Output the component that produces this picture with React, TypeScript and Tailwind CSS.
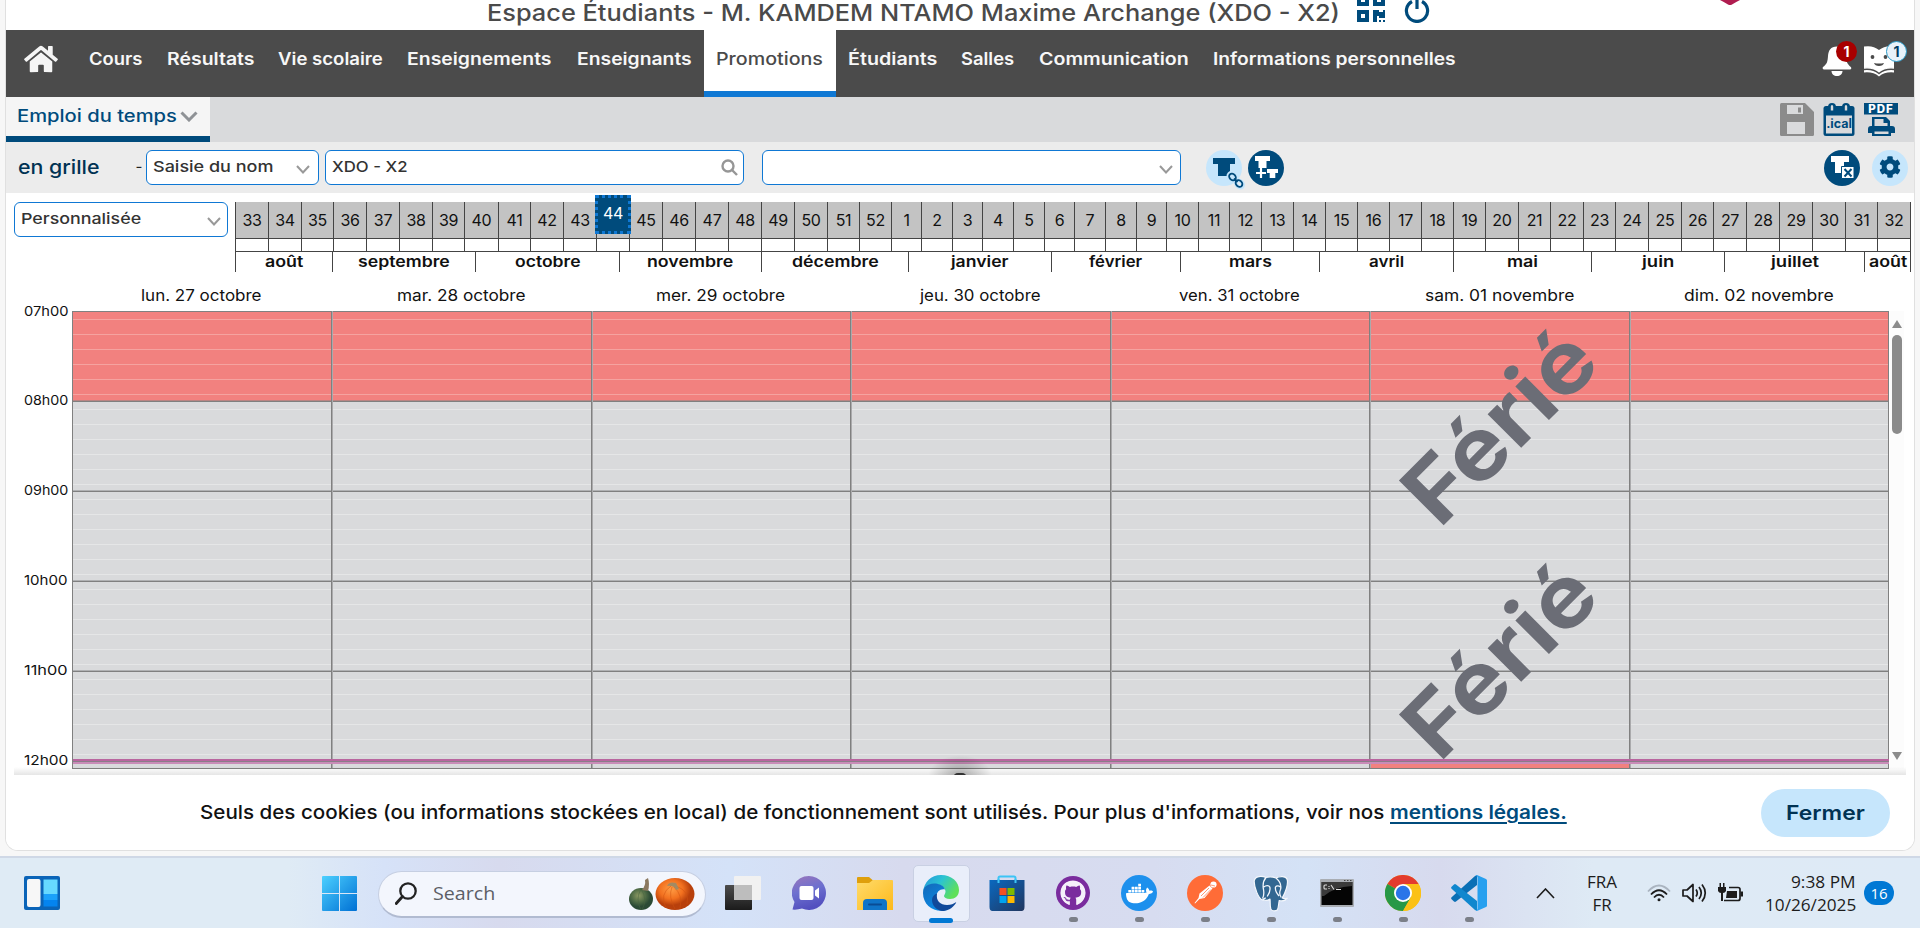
import { useLayoutEffect, useRef, useState } from "react";
import type { ReactNode } from "react";
import { FaHome, FaQrcode, FaCog, FaGithub } from "react-icons/fa";
import { SiDocker } from "react-icons/si";

/** Single line of text stretched horizontally to a given width. */
function T({ w, className = "", children }: { w: number; className?: string; children: ReactNode }) {
  const ref = useRef<HTMLSpanElement>(null);
  const [scale, setScale] = useState(1);
  useLayoutEffect(() => {
    if (ref.current) setScale(w / ref.current.offsetWidth);
  }, [w]);
  return (
    <span className="flex shrink-0 justify-start text-left whitespace-nowrap" style={{ width: w }}>
      <span ref={ref} className={`block shrink-0 origin-left ${className}`} style={{ transform: `scaleX(${scale})` }}>
        {children}
      </span>
    </span>
  );
}

function Chevron({ className = "" }: { className?: string }) {
  return (
    <svg viewBox="0 0 14 9" className={`h-[9px] w-[14px] ${className}`} fill="none" stroke="#999" strokeWidth="2">
      <path d="M1 1l6 6.5L13 1" />
    </svg>
  );
}

const NAV: [string, number][] = [
  ["Cours", 53],
  ["Résultats", 87],
  ["Vie scolaire", 105],
  ["Enseignements", 145],
  ["Enseignants", 114.8],
  ["Promotions", 107.5],
  ["Étudiants", 89.2],
  ["Salles", 53],
  ["Communication", 150],
  ["Informations personnelles", 243],
];

const WEEK_X = [
  235, 268, 301, 333, 366, 399, 432, 464, 498, 530, 563, 596, 629, 662, 695, 728, 761, 794, 827, 859, 891, 921, 952,
  982, 1013, 1044, 1074, 1105, 1136, 1166, 1198, 1229, 1261, 1293, 1325, 1357, 1389, 1421, 1453, 1485, 1518, 1550,
  1583, 1615, 1648, 1681, 1713, 1746, 1779, 1812, 1845, 1877, 1910,
];
const WEEKS = WEEK_X.slice(0, -1).map((x, i) => ({ n: i < 20 ? 33 + i : i - 19, w: WEEK_X[i + 1] - x }));

const MONTHS: [string, number, number][] = [
  ["août", 97, 38],
  ["septembre", 143, 92],
  ["octobre", 144, 65.5],
  ["novembre", 142, 86.5],
  ["décembre", 147, 86.5],
  ["janvier", 143, 57.5],
  ["février", 129, 53.5],
  ["mars", 139, 42.5],
  ["avril", 134, 35],
  ["mai", 138, 31],
  ["juin", 133, 32],
  ["juillet", 140, 48],
  ["août", 46, 38],
];

const DAYS: [string, number, number][] = [
  ["lun. 27 octobre", 259, 121],
  ["mar. 28 octobre", 260, 129],
  ["mer. 29 octobre", 259, 129],
  ["jeu. 30 octobre", 260, 121],
  ["ven. 31 octobre", 259, 121],
  ["sam. 01 novembre", 260, 149],
  ["dim. 02 novembre", 259, 150],
];
const HOURS = ["07h00", "08h00", "09h00", "10h00", "11h00", "12h00"];
const SLOTS = [0, 1, 2, 3, 4, 5];

function Header() {
  return (
    <div className="flex h-[30px] items-start overflow-hidden pl-[481px]">
      <div className="pt-px">
        <T w={853} className="text-[23px] leading-[24px] font-medium text-[#4a4a4a]">
          Espace Étudiants - M. KAMDEM NTAMO Maxime Archange (XDO - X2)
        </T>
      </div>
      <FaQrcode className="-mt-[8px] ml-[15px] size-[32px] shrink-0 text-[#004b7c]" />
      <svg viewBox="0 0 26 26" className="-mt-[3px] ml-[17px] size-[26px] shrink-0" fill="none" stroke="#004b7c" strokeWidth="3.2">
        <path d="M8 4.500a10.600 10.600 0 1 0 10 0M13 0v12" />
      </svg>
      <svg viewBox="0 0 26 6" className="ml-[287px] h-[6px] w-[26px] shrink-0">
        <path d="M3 0h20q-4 2-8 4.600q-2 1-4 0Q7 2 3 0z" fill="#b01d50" />
      </svg>
    </div>
  );
}

function NavBar() {
  return (
    <nav className="flex h-[67px] bg-[#4b4b4b]">
      <div className="w-[71px] shrink-0 pt-[14px] pl-[18px]">
        <FaHome className="h-[30px] w-[34px] text-[#f5f5f5]" />
      </div>
      {NAV.map(([label, w]) =>
        label === "Promotions" ? (
          <div key={label} className="h-full border-b-[6px] border-[#0f78d4] bg-white px-[12.2px]">
            <div className="flex h-[60px] items-center">
              <T w={w} className="text-[17px] font-medium text-[#4a4a4a]">{label}</T>
            </div>
          </div>
        ) : (
          <div key={label} className="flex h-[60px] items-center px-[12.200px]">
            <T w={w} className="text-[17px] font-semibold text-[#f7f7f7]">{label}</T>
          </div>
        ),
      )}
      <div className="mr-[16px] ml-auto flex gap-[11px] pt-[15px]">
        <div className="relative h-[32px] w-[30px]">
          <svg viewBox="0 0 30 32" className="h-[32px] w-[30px]" fill="#fff">
            <path d="M15 1.500c-6.500 0-8.500 4-9 9.500-.4 6-1 8-5 11-.9 1 0 2.500 1 2.500h26c1.300 0 1.700-1.500.8-2.500-3.600-3-4.400-5-4.800-11C23.500 5 21 1.500 15 1.500zM9.500 26h11c0 3-2.500 5-5.500 5s-5.500-2-5.500-5z" />
          </svg>
          <span className="absolute -top-[4px] left-[14px] flex size-[21px] items-center justify-center rounded-full bg-[#a80000] text-[14px] font-bold text-white">1</span>
        </div>
        <div className="relative mr-[3px] h-[32px] w-[32px]">
          <svg viewBox="0 0 32 32" className="size-[32px]">
            <path d="M1 1.500q9-1.500 15 3.500Q22 0 31 1.500V23q-9-1-15 5Q10 22 1 23z" fill="#fff" />
            <path d="M1 22.500q9-1 15 4.500q6-5.500 15-4.500v5q-9-1-15 4q-6-5-15-4z" fill="#fff" />
            <path d="M1 24.500q9-1 15 4q6-5 15-4" fill="none" stroke="#4b4b4b" strokeWidth="1.500" />
            <circle cx="9.500" cy="12" r="1.900" fill="#4b4b4b" />
            <circle cx="22.500" cy="12" r="1.900" fill="#4b4b4b" />
            <path d="M11 18q5 1 10 0q-1 3-5 3t-5-3z" fill="#4b4b4b" />
          </svg>
          <span className="absolute -top-[4px] left-[23px] flex size-[21px] items-center justify-center rounded-full border border-[#2b9bc9] bg-[#e8f2fa] text-[14px] font-bold text-[#003d63]">1</span>
        </div>
      </div>
    </nav>
  );
}

function TabBar() {
  return (
    <div className="flex h-[45px] bg-[#d9dadc]">
      <div className="flex h-full w-[204px] shrink-0 items-center border-b-[6px] border-[#004b7c] bg-[#f5f5f5] pl-[11px]">
        <T w={160} className="text-[17px] font-medium text-[#004b7c]">Emploi du temps</T>
        <svg viewBox="0 0 18 11" className="ml-[3px] h-[11px] w-[18px]" fill="none" stroke="#8f9296" strokeWidth="3">
          <path d="M1.500 1.500L9 9l7.500-7.500" />
        </svg>
      </div>
      <div className="mr-[16px] ml-auto flex gap-[9px] pt-[6px]">
        <svg viewBox="0 0 34 33" className="h-[33px] w-[34px]">
          <path d="M1.500 0H25l9 9v22.500q0 1.500-1.500 1.500h-31Q0 33 0 31.500v-30Q0 0 1.500 0z" fill="#8b8b8b" />
          <path d="M7 2h16v9H7zM7 19h18v12H7z" fill="#d9dadc" />
          <path d="M18 4.500h3v5h-3z" fill="#8b8b8b" />
        </svg>
        <svg viewBox="0 0 32 33" className="h-[33px] w-[32px]">
          <path d="M3 3h26q2.500 0 2.500 2.500v25q0 2.500-2.500 2.500H3Q.5 33 .5 30.500v-25Q.5 3 3 3z" fill="#004b7c" />
          <path d="M3 12.500h26v18H3z" fill="#d9dadc" />
          <path d="M5 4q0-4 4-4t4 4v5H5zM19 4q0-4 4-4t4 4v5h-8z" fill="#004b7c" />
          <path d="M7.800 3.500q0-1.500 1.200-1.500t1.200 1.500v4H7.800zM21.800 3.500q0-1.500 1.200-1.500t1.200 1.500v4h-2.400z" fill="#d9dadc" />
          <text x="16" y="25" textAnchor="middle" fontSize="12.500" fontWeight="700" fill="#004b7c">.ical</text>
        </svg>
        <svg viewBox="0 0 34 33" className="h-[33px] w-[34px]">
          <path d="M0 0h34v11.500H0z" fill="#004b7c" />
          <text x="17" y="9.800" textAnchor="middle" fontSize="11.500" fontWeight="800" letterSpacing="1" fill="#fff">PDF</text>
          <path d="M8 14h14l4 4v5h2q3 0 3 3v4h-4v3H8v-3H4v-4q0-3 3-3h1z" fill="#004b7c" />
          <path d="M10.500 16h9v4h4v3h-13zM10.500 28.500h14v2.500h-14z" fill="#d9dadc" />
        </svg>
      </div>
    </div>
  );
}

function Toolbar() {
  return (
    <div className="flex h-[51px] items-center bg-[#ececec] pl-[11.500px]">
      <span className="pt-px">
        <T w={82} className="text-[19px] font-medium text-[#003253]">en grille</T>
      </span>
      <span className="ml-[36px] w-[10px] text-[15px] text-[#222]">-</span>
      <div className="flex h-[35px] w-[173px] items-center rounded-[6px] border border-[#0f78d4] bg-white pl-[6px]">
        <T w={120} className="text-[15px] font-medium text-[#333]">Saisie du nom</T>
        <Chevron className="mt-[3px] ml-[23px]" />
      </div>
      <div className="ml-[6px] flex h-[35px] w-[419px] items-center justify-between rounded-[6px] border border-[#0f78d4] bg-white pr-[5px] pl-[6px]">
        <T w={76} className="text-[15px] font-medium text-[#333]">XDO - X2</T>
        <svg viewBox="0 0 17 17" className="size-[17px]" fill="none" stroke="#969696" strokeWidth="2.400">
          <circle cx="7" cy="7" r="5.500" />
          <path d="M11 11l5 5" />
        </svg>
      </div>
      <div className="ml-[18px] flex h-[35px] w-[419px] items-center justify-end rounded-[6px] border border-[#0f78d4] bg-white pr-[7px]">
        <Chevron className="mt-[3px]" />
      </div>
      <svg viewBox="0 0 40 36" className="ml-[25px] h-[36px] w-[40px] overflow-visible">
        <circle cx="18" cy="18" r="18" fill="#c6e6fc" />
        <path d="M7 8h22v6h-5v12h-12V14H7z" fill="#004b7c" />
        <g fill="none">
          <ellipse cx="26.500" cy="27" rx="4" ry="3" transform="rotate(45 26.500 27)" stroke="#c6e6fc" strokeWidth="5" />
          <ellipse cx="33.500" cy="34" rx="4" ry="3" transform="rotate(45 33.500 34)" stroke="#c6e6fc" strokeWidth="4" />
          <ellipse cx="26.500" cy="27" rx="3.700" ry="3" transform="rotate(45 26.500 27)" stroke="#004b7c" strokeWidth="1.800" />
          <ellipse cx="33" cy="33.500" rx="3.700" ry="3" transform="rotate(45 33 33.500)" stroke="#004b7c" strokeWidth="1.800" />
          <path d="M28 28.500l3.500 3.500" stroke="#004b7c" strokeWidth="2" />
        </g>
      </svg>
      <svg viewBox="0 0 36 36" className="ml-[2px] size-[36px]">
        <circle cx="18" cy="18" r="18" fill="#004b7c" />
        <path d="M7 6h15v5h-3.500v7h-8v-7H7zM19 19h11v4h-2.700v5h-5.600v-5H19z" fill="#fff" />
        <path d="M13 18v10M8 23h10" stroke="#fff" strokeWidth="2.200" />
      </svg>
      <svg viewBox="0 0 36 36" className="ml-auto size-[36px]">
        <circle cx="18" cy="18" r="18" fill="#004b7c" />
        <path d="M7 6h18v6h-5v11h-9V12H7z" fill="#fff" />
        <path d="M17.500 16.500h12.500v12H17.500z" fill="#fff" stroke="#004b7c" strokeWidth="1" />
        <path d="M20.500 19l7 7.500M27.500 19l-7 7.500" stroke="#004b7c" strokeWidth="2" />
      </svg>
      <div className="mr-[6px] ml-[12px] flex size-[36px] items-center justify-center rounded-full bg-[#c6e6fc]">
        <FaCog className="mb-[2px] size-[22px] text-[#004b7c]" />
      </div>
    </div>
  );
}

function WeekStrip() {
  return (
    <div className="flex h-[79px] pt-[9px]">
      <div className="w-[229px] shrink-0 pl-[8px]">
        <div className="flex h-[35px] w-[214px] items-center justify-between rounded-[6px] border border-[#0f78d4] bg-white pr-[6px] pl-[6px]">
          <T w={120} className="text-[15px] font-medium text-[#333]">Personnalisée</T>
          <Chevron className="mt-[3px]" />
        </div>
      </div>
      <div className="h-[70px] w-[1676px] border-r border-[#444]">
        <div className="flex h-[37px] border-b border-[#444]">
          {WEEKS.map(({ n, w }) => (
            <div key={n} className="relative flex shrink-0 items-center justify-center border-l border-[#444] bg-[#c3c3c3] pb-px text-[16px] tracking-[-0.3px] text-[#111]" style={{ width: w }}>
              {n === 44 ? (
                <div className="absolute -top-[7px] -left-[2px] z-10 flex h-[39px] w-[36px] items-center justify-center border-[3px] border-dotted border-[#0f78d4] bg-[#004b7c] pb-[4px] text-white">
                  {n}
                </div>
              ) : (
                n
              )}
            </div>
          ))}
        </div>
        <div className="flex h-[13px] border-b border-[#444]">
          {WEEKS.map(({ n, w }) => (
            <div key={n} className="shrink-0 border-l border-[#444]" style={{ width: w }} />
          ))}
        </div>
        <div className="flex h-[20px]">
          {MONTHS.map(([m, w, tw], i) => (
            <div key={i} className="flex shrink-0 items-center justify-center border-l border-[#444] pb-px" style={{ width: w }}>
              <T w={tw} className="text-[15px] leading-[18px] font-semibold text-[#111]">{m}</T>
            </div>
          ))}
        </div>
      </div>
    </div>
  );
}

function HourBlock({ red }: { red: boolean }) {
  return (
    <div className={`h-[90px] shrink-0 border-b ${red ? "border-[#b98483] bg-[#f2817f]" : "border-[#b0b1b3] bg-[#d9dadc]"}`}>
      {SLOTS.map((s) => (
        <div key={s} className={`${s === 5 ? "h-[14px]" : "h-[15px]"} ${s === 0 ? "border-t border-[#808080] pt-[7px]" : "pt-[8px]"}`}>
          <div className={`h-px ${red ? "bg-[#f5a3a0]" : "bg-[#e5e6e7]"}`} />
        </div>
      ))}
    </div>
  );
}

function Watermark() {
  return (
    <div className="flex h-[234px] items-center justify-center pr-[3px] pb-[5px]">
      <div className="-rotate-45">
        <T w={232} className="text-[87px] leading-[87px] font-bold text-[#6b6d76]">Férié</T>
      </div>
    </div>
  );
}

function Timetable() {
  return (
    <div>
      <div className="flex h-[39px] items-start pt-[12px] pl-[66px]">
        {DAYS.map(([d, w, tw]) => (
          <div key={d} className="flex h-[22px] items-center justify-center" style={{ width: w }}>
            <T w={tw} className="text-[16px] leading-[22px] text-[#111]">{d}</T>
          </div>
        ))}
      </div>
      <div className="flex">
        <div className="-mt-[8px] w-[66px] shrink-0">
          {HOURS.map((h) => (
            <div key={h} className="h-[90px] pl-[18px] first:h-[89px] last:h-[16px]">
              <T w={44} className="text-[13px] leading-[16px] text-[#111]">{h}</T>
            </div>
          ))}
        </div>
        <div className="relative flex h-[458px] border-b border-l border-[#808080]">
          {DAYS.map(([d, w], i) => (
            <div key={d} className={`relative flex flex-col border-r border-[#808080] ${i > 0 ? "border-l border-l-[#aaaaac]" : ""}`} style={{ width: w }}>
              <HourBlock red />
              <HourBlock red={false} />
              <HourBlock red={false} />
              <HourBlock red={false} />
              <HourBlock red={false} />
              <div className={`h-[7px] border-t border-[#808080] ${i === 5 ? "bg-[#f2817f]" : "bg-[#d9dadc]"}`} />
              {i === 5 && (
                <div className="absolute inset-0">
                  <Watermark />
                  <Watermark />
                </div>
              )}
            </div>
          ))}
          <div className="absolute top-[448px] left-0 flex h-[5px] w-full flex-col">
            <div className="h-[2px] bg-[#b9659f]" />
            <div className="h-px bg-[#8a7d88]" />
            <div className="h-[2px] bg-[#c98bb8]" />
          </div>
        </div>
        <div className="ml-px flex w-[14px] flex-col items-center bg-[#fcfcfc] pt-[9px]">
          <svg viewBox="0 0 10 8" className="h-[8px] w-[10px]" fill="#8b8b8b"><path d="M5 0l5 8H0z" /></svg>
          <div className="mt-[7px] h-[99px] w-[10px] rounded-full bg-[#8b8b8b]" />
          <svg viewBox="0 0 10 8" className="mt-[318px] h-[8px] w-[10px]" fill="#8b8b8b"><path d="M5 8l5-8H0z" /></svg>
        </div>
      </div>
    </div>
  );
}

function CookieBar() {
  return (
    <div className="relative z-10 mt-[6px] h-[75px]">
      <div className="absolute -top-[8px] right-[8px] left-[8px] h-[8px] bg-gradient-to-t from-black/10 to-transparent" />
      <div className="absolute -top-[20px] left-[922px] h-[20px] w-[64px] overflow-hidden bg-[radial-gradient(ellipse_at_bottom,rgba(0,0,0,0.28),transparent_70%)]">
        <div className="mx-auto mt-[18px] h-[10px] w-[14px] rounded-full bg-[#333]" />
      </div>
      <div className="relative flex h-full items-center rounded-b-[12px] bg-white pl-[194px]">
        <span className="pt-px">
          <T w={1184} className="text-[19px] font-medium text-[#111]">
            Seuls des cookies (ou informations stockées en local) de fonctionnement sont utilisés. Pour plus d'informations, voir nos
          </T>
        </span>
        <span className="w-[5.500px]" />
        <span className="pt-px">
          <T w={177} className="text-[19px] font-semibold text-[#004b7c] underline decoration-2 underline-offset-[3px]">mentions légales.</T>
        </span>
        <button className="mr-[24px] ml-auto flex h-[48px] w-[129px] items-center justify-center rounded-full bg-[#c6e6fc]">
          <T w={79} className="text-[20px] font-semibold text-[#003253]">Fermer</T>
        </button>
      </div>
    </div>
  );
}

function TaskButton({ children, dot = true }: { children: ReactNode; dot?: boolean }) {
  return (
    <div className="relative flex h-full w-[66px] shrink-0 items-center justify-center">
      {children}
      {dot && <span className="absolute bottom-[6px] left-[29px] h-[5px] w-[9px] rounded-full bg-[#7b7f88]" />}
    </div>
  );
}

function Taskbar() {
  return (
    <div className="mt-[5px] border-t-2 border-[#cfd8e6]">
      <div className="flex h-[70px] items-center bg-[linear-gradient(90deg,#dfebf5_0%,#dfebf5_15%,#d6e2f8_20%,#d7daee_26%,#d4e2f8_38%,#d7daee_47%,#d7dcf0_60%,#d4e2f6_68%,#d7daee_75%,#deeaf5_83%,#deeaf6_100%)] pl-[24px] font-['Open_Sans',sans-serif]">
        <svg viewBox="0 0 36 34" className="h-[34px] w-[36px]">
          <rect width="36" height="34" rx="2" fill="#0a64b8" />
          <rect x="3" y="3" width="13.500" height="28" rx="2" fill="#f7f7f7" />
          <path d="M19.500 3.500h14v14.500h-14z" fill="#66d9ff" />
          <path d="M19.500 18h14v6h-14z" fill="#1ba1fa" />
          <path d="M19.500 24h14v6.500h-14z" fill="#0484f0" />
        </svg>
        <svg viewBox="0 0 35 35" className="ml-[262px] size-[35px]">
          <defs>
            <linearGradient id="win" x1="0" y1="0" x2="1" y2="1">
              <stop offset="0" stopColor="#4cd0ff" />
              <stop offset="1" stopColor="#0070d4" />
            </linearGradient>
          </defs>
          <path d="M1 0h16v17H0V1q0-1 1-1zM18 0h16q1 0 1 1v16H18zM0 18h17v17H1q-1 0-1-1zM18 18h17v16q0 1-1 1H18z" fill="url(#win)" />
        </svg>
        <div className="mt-[2px] ml-[21px] flex h-[47px] w-[328px] shrink-0 items-center rounded-full border border-b-2 border-[#c6cfe2] border-b-[#b1bbd1] bg-[#f3f6fd] pl-[16px]">
          <svg viewBox="0 0 22 23" className="h-[23px] w-[22px]" fill="none" stroke="#222" strokeWidth="2.300">
            <circle cx="13" cy="9" r="7.700" />
            <path d="M7.500 14.500L1.200 21.500" strokeLinecap="round" strokeWidth="2.800" />
          </svg>
          <span className="ml-[16px]">
            <T w={62} className="text-[19px] text-[#5c5e66]">Search</T>
          </span>
          <svg viewBox="0 0 66 34" className="ml-[134px] h-[34px] w-[66px] shrink-0">
            <defs>
              <radialGradient id="og" cx=".4" cy=".35">
                <stop offset="0" stopColor="#ff9d45" />
                <stop offset=".6" stopColor="#f2701f" />
                <stop offset="1" stopColor="#b8400c" />
              </radialGradient>
              <radialGradient id="gg" cx=".4" cy=".35">
                <stop offset="0" stopColor="#8d9a63" />
                <stop offset=".6" stopColor="#4e6b45" />
                <stop offset="1" stopColor="#2b4a35" />
              </radialGradient>
            </defs>
            <ellipse cx="12" cy="22" rx="12" ry="11" fill="url(#gg)" />
            <path d="M12 12q-6 10 0 21M12 12q7 10 1 21" stroke="#48644080" fill="none" />
            <path d="M13 13q4-5 3-10l3-2q2 6 0 13z" fill="#8a7860" />
            <ellipse cx="46" cy="17" rx="19.500" ry="16" fill="url(#og)" />
            <path d="M42 9q-12 8-5 22M43 10q-4 10 3 22M45 10q9 8 6 21M47 9q14 5 11 18" stroke="#d0520f80" fill="none" />
            <path d="M38 9q2-5 9-3l3 6-3 1q-2-5-9-4z" fill="#a38a63" />
          </svg>
        </div>
        <div className="ml-[4px] flex h-full">
          <TaskButton dot={false}>
            <svg viewBox="0 0 36 34" className="h-[34px] w-[36px]">
              <defs>
                <linearGradient id="dk" x1="0" y1="0" x2="0" y2="1">
                  <stop offset="0" stopColor="#4c4c4c" />
                  <stop offset="1" stopColor="#1b1b1b" />
                </linearGradient>
              </defs>
              <rect y="9" width="27" height="25" rx="1" fill="url(#dk)" />
              <rect x="9" width="27" height="24" rx="1" fill="#f1f1f1" />
              <path d="M9 9h18v15H9z" fill="#bdbdbd" />
            </svg>
          </TaskButton>
          <TaskButton dot={false}>
            <svg viewBox="0 0 34 34" className="size-[34px]">
              <defs>
                <linearGradient id="ch" x1="0" y1="0" x2=".3" y2="1">
                  <stop offset="0" stopColor="#9a76bb" />
                  <stop offset=".5" stopColor="#6d70cf" />
                  <stop offset="1" stopColor="#5350bf" />
                </linearGradient>
              </defs>
              <path d="M17 0a17 17 0 1 1-7 32.500Q5 34 .5 33.500L2.500 26A17 17 0 0 1 17 0z" fill="url(#ch)" />
              <rect x="7.500" y="10" width="14" height="14" rx="2" fill="#fff" />
              <path d="M23 14.500l4-3v11l-4-3z" fill="#fff" />
            </svg>
          </TaskButton>
          <TaskButton dot={false}>
            <svg viewBox="0 0 36 33" className="h-[33px] w-[36px]">
              <defs>
                <linearGradient id="fo" x1="0" y1="0" x2="1" y2="1">
                  <stop offset="0" stopColor="#ffdb6b" />
                  <stop offset="1" stopColor="#fdb91a" />
                </linearGradient>
              </defs>
              <path d="M0 1q0-1 1-1h11l4 3.500V8H0z" fill="#df9f0c" />
              <path d="M0 6h12l4-3h19q1 0 1 1v29H0z" fill="url(#fo)" />
              <path d="M6 33v-7q0-4 4-4h16q4 0 4 4v7z" fill="#0f74c8" />
              <rect x="11" y="26.500" width="14" height="2" rx="1" fill="#0a4c94" />
            </svg>
          </TaskButton>
          <TaskButton dot={false}>
            <div className="flex size-[57px] items-center justify-center rounded-[5px] border border-[#c9d0e3] bg-[#e9eefa]">
              <svg viewBox="0 0 36 36" className="size-[36px]">
                <defs>
                  <linearGradient id="e1" x1="0" y1="0" x2="1" y2=".5">
                    <stop offset="0" stopColor="#2493dd" />
                    <stop offset=".5" stopColor="#2bc3d2" />
                    <stop offset="1" stopColor="#5fe05a" />
                  </linearGradient>
                  <linearGradient id="e2" x1="0" y1="0" x2=".6" y2="1">
                    <stop offset="0" stopColor="#1469b8" />
                    <stop offset="1" stopColor="#0a8ae6" />
                  </linearGradient>
                </defs>
                <path d="M0 17C1 7 8 0 18 0c11 0 18 7 18 15 0 6-4 9-9 9-4 0-6-1.500-6-3 0-1 1.500-2 1.500-4.500C22.500 12 17 9 11 9 6 9 2 12 0 17z" fill="url(#e1)" />
                <path d="M0 18c0-6 5-9.500 11-9.500S21 11 22 14.500c-5-1-8.500 2.500-8.500 7C13.500 27 17 33 24 35 12 38.500 0 31 0 18z" fill="url(#e2)" />
                <path d="M14 18.500c-1.500 7 3.500 11.500 10 11.500 4 0 7-1.500 8.500-2.500q1-.5.5.5C29 34 24 36 19 36c-6-1-10-6-10-11 0-3 2-5.500 5-6.500z" fill="#10499a" />
              </svg>
            </div>
            <span className="absolute bottom-[5px] left-[21px] h-[5px] w-[24px] rounded-full bg-[#0078d4]" />
          </TaskButton>
          <TaskButton dot={false}>
            <svg viewBox="0 0 36 36" className="size-[36px]">
              <defs>
                <linearGradient id="st" x1="0" y1="0" x2="1" y2="1">
                  <stop offset="0" stopColor="#0a69c0" />
                  <stop offset="1" stopColor="#21365f" />
                </linearGradient>
              </defs>
              <path d="M9.500 7V3q0-1.500 1.500-1.500h14q1.500 0 1.500 1.500v4" fill="none" stroke="#3cc4f6" strokeWidth="2" />
              <path d="M.5 5h35v27q0 4-3 4h-29q-3 0-3-4z" fill="url(#st)" />
              <path d="M9.500 8V4M26.500 8V4" stroke="#3cc4f6" strokeWidth="2" />
              <path d="M10.500 13h7v7h-7z" fill="#f25022" />
              <path d="M18.500 13h7v7h-7z" fill="#7fba00" />
              <path d="M10.500 21h7v7h-7z" fill="#00a4ef" />
              <path d="M18.500 21h7v7h-7z" fill="#ffb900" />
            </svg>
          </TaskButton>
          <TaskButton>
            <div className="flex size-[34px] items-center justify-center rounded-full bg-[#7a2c9e]">
              <FaGithub className="size-[26px] rounded-full text-[#f5f0fa]" />
            </div>
          </TaskButton>
          <TaskButton>
            <div className="flex size-[36px] items-center justify-center rounded-full bg-[#1d90ed]">
              <SiDocker className="size-[27px] text-white" />
            </div>
          </TaskButton>
          <TaskButton>
            <svg viewBox="0 0 36 36" className="size-[36px]">
              <circle cx="18" cy="18" r="18" fill="#ff6c37" />
              <circle cx="26.500" cy="9.500" r="3.100" fill="#fff" />
              <path d="M22.500 10.500l3 3-8 9.500-5 1-4.500 4.500-.5-.5 4-5 1-4.500z" fill="#fff" />
              <path d="M14 21l8-8M16 22.500l8-8M24 10l4 1" stroke="#ff6c37" strokeWidth=".7" />
            </svg>
          </TaskButton>
          <TaskButton>
            <svg viewBox="0 0 36 36" className="size-[36px] overflow-visible" strokeLinejoin="round">
              <g fill="#336791" stroke="#f4f7fc" strokeWidth="1.200">
                <path d="M23 3C27 .8 33 1 34.200 4.500c1.300 5-2 13.500-5 18.500 2 .8 4 .5 5 .2-1.500 2.300-5 3-8 2.300-.8 4-.5 7.500-2 9.500-2.200 1.500-6 1-6.500-1.500-.8-3-.3-6.500-.7-9.500-2 1.500-4.500 1.700-6.500 1-1.300-.7.800-1.500 2-2L9.500 25C5.500 24 1 12 1.200 6 2 .5 9 .8 13 2.500q4.500-1.500 10 .5z" />
              </g>
              <g fill="none" stroke="#f4f7fc" strokeWidth="1.300">
                <path d="M13 2.500c-3.500 4-3.300 8-2.500 12 .5 3 .8 6-1 9M10.800 12c2-1.500 5-2 6 0 .8 3-.2 6-2.600 9.500M23 3c4 3.500 5.500 8 4.500 11.500-1.300 3-1.300 5 .7 8M27.500 12c-1.700-1.300-4-1.500-5 0-.6 3 1 6 3.500 9" />
              </g>
            </svg>
          </TaskButton>
          <TaskButton>
            <svg viewBox="0 0 34 28" className="h-[28px] w-[34px]">
              <rect width="34" height="28" rx="1" fill="#a9adb3" />
              <rect x="1.500" y="3" width="31" height="23" fill="#050505" />
              <path d="M2 3h30v4Q14 8 4 17H2z" fill="#3a3a3a" />
              <path d="M24 1.500h1.500M27 1.500h1.500M30 1.500h1.500" stroke="#444" />
              <path d="M7 6H5q-1 0-1 1v2q0 1 1 1h2M9 7v1M9 9v1M11 6l3 4.500M16 10.500h5" stroke="#ddd" fill="none" strokeWidth="1.100" />
            </svg>
          </TaskButton>
          <TaskButton>
            <svg viewBox="0 0 36 36" className="size-[36px]">
              <circle cx="18" cy="18" r="18" fill="#fbc116" />
              <path d="M18 18L2.400 9A18 18 0 0 1 33.600 9z" fill="#e33b2e" />
              <path d="M2.400 9A18 18 0 0 0 18 36l7.800-13.500L18 18z" fill="#279847" />
              <path d="M18 9h15.600A18 18 0 0 1 18 36l7.800-13.500z" fill="#fbc116" />
              <circle cx="18" cy="18" r="9" fill="#fff" />
              <circle cx="18" cy="18" r="7.200" fill="#2a75e8" />
            </svg>
          </TaskButton>
          <TaskButton>
            <svg viewBox="0 0 36 36" className="size-[36px]">
              <path d="M26 .3V10L5 26.500q-1 .8-2 0L.6 24.300q-1-1 0-2L24 1z" fill="#0a6fb5" />
              <path d="M26 35.700V26L5 9.500q-1-.8-2 0L.6 11.700q-1 1 0 2L24 35z" fill="#1087ce" />
              <path d="M26.500.2L35 4q1 .5 1 1.500v25q0 1-1 1.500l-8.500 3.800q-1 .3-2-.8 2 .5 2-1.500V2.500q0-2-2-1.500 1-1.200 2-.8z" fill="#27a0ef" />
            </svg>
          </TaskButton>
        </div>
        <svg viewBox="0 0 19 11" className="ml-[34px] h-[11px] w-[19px]" fill="none" stroke="#1c1c1c" strokeWidth="1.600">
          <path d="M1 10l8.500-9L18 10" />
        </svg>
        <div className="ml-[30px] flex w-[34px] flex-col items-center">
          <T w={30} className="text-[17px] leading-[23px] text-[#1c1c1c]">FRA</T>
          <T w={19} className="text-[17px] leading-[23px] text-[#1c1c1c]">FR</T>
        </div>
        <svg viewBox="0 0 24 18" className="ml-[28px] h-[18px] w-[24px]" fill="none" stroke="#1c1c1c" strokeWidth="1.800">
          <path d="M1 7.500q11-12 22 0" stroke="#aab4c0" />
          <path d="M4 10.500q8-8.500 16 0M7 13.500q5-5.500 10 0" />
          <circle cx="12" cy="15.800" r="1.500" fill="#1c1c1c" stroke="none" />
        </svg>
        <svg viewBox="0 0 25 20" className="ml-[11px] h-[20px] w-[25px]" fill="none" stroke="#1c1c1c" strokeWidth="1.700">
          <path d="M1 7h4l6-5.500v17L5 13H1z" strokeLinejoin="round" />
          <path d="M14 6.500q2.500 3.500 0 7M17 4q4.500 6 0 12M20 1.500q6.500 8.500 0 17" />
        </svg>
        <svg viewBox="0 0 25 20" className="ml-[11px] h-[20px] w-[25px]">
          <path d="M6 17.500h14q2 0 2-2v-9q0-2-2-2h-9" fill="none" stroke="#1c1c1c" strokeWidth="1.700" />
          <path d="M9 8h10v7H8zM22.500 8.500H25v5h-2.500zM0 4h8v4q-1 2-3 2v8H3v-8Q1 10 0 8zM1.500 0h1.500v4H1.500zM5 0h1.500v4H5z" fill="#1c1c1c" />
        </svg>
        <div className="ml-auto flex flex-col items-end">
          <T w={65} className="text-[17px] leading-[23px] text-[#1c1c1c]">9:38 PM</T>
          <T w={91} className="text-[17px] leading-[23px] text-[#1c1c1c]">10/26/2025</T>
        </div>
        <div className="mr-[26px] ml-[8px] flex h-[24px] w-[30px] items-center justify-center rounded-full bg-[#0078d4] text-[15px] text-white">16</div>
      </div>
    </div>
  );
}

export default function App() {
  return (
    <div className="h-[928px] w-[1920px] overflow-hidden bg-[#f7f7f7] font-['Inter','Open_Sans',sans-serif]">
      <div className="mx-[5px] h-[851px] rounded-b-[13px] border-x border-b border-[#e0e0e0] bg-white">
        <Header />
        <NavBar />
        <TabBar />
        <Toolbar />
        <WeekStrip />
        <Timetable />
        <CookieBar />
      </div>
      <Taskbar />
    </div>
  );
}
